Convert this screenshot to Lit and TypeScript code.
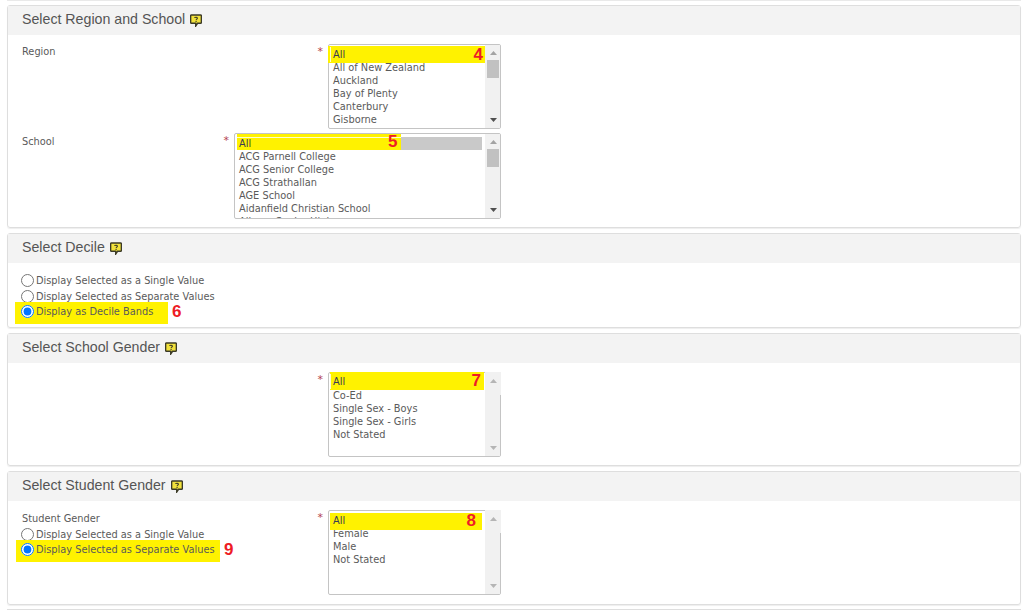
import { LitElement, html, css, nothing } from "lit";
import { customElement } from "lit/decorators.js";

const help = html`<svg class="help" width="12" height="13" viewBox="0 0 13 14" aria-hidden="true">
  <path d="M1.500 1h10a.8.8 0 0 1 .8.8v7.400a.8.8 0 0 1-.8.8H8.200L6.200 13V10H1.500a.8.8 0 0 1-.8-.8V1.800a.8.8 0 0 1 .8-.8z" fill="#f2e23c" stroke="#3b3a26" stroke-width="1.500"/>
  <path d="M5 4.300c.2-1 2.900-1.200 3 .2 0 1-1.400 1-1.400 2.100M6.600 7.500v1" fill="none" stroke="#3b3a26" stroke-width="1.200"/>
</svg>`;

type Mark = { n: string; cls: string };

function listbox(cls: string, items: string[], mark: Mark, scroll: boolean) {
  return html`<div class="listbox ${cls}">
    <div class="opts">
      ${items.map((t) => html`<div class="opt">${t}</div>`)}
    </div>
    <div class="mark ${mark.cls}"><span class="line"></span><span class="txt">All</span><b class="num">${mark.n}</b></div>
    <div class="sb">
      ${scroll ? nothing : html`<div class="cap"></div>`}
      <svg width="14" height="10" viewBox="0 0 14 10"><path d="M4 7h7L7.500 3z" fill="${scroll ? "#a3a3a3" : "#b5b5b5"}"/></svg>
      ${scroll ? html`<div class="thumb"></div>` : nothing}
      <div class="sp"></div>
      <svg width="14" height="10" viewBox="0 0 14 10"><path d="M4 3h7L7.500 7z" fill="${scroll ? "#505050" : "#b5b5b5"}"/></svg>
    </div>
  </div>`;
}

@customElement("app-root")
export class AppRoot extends LitElement {
  static styles = css`
    :host {
      display: block;
      width: 1024px;
      height: 610px;
      overflow: hidden;
      background: #fff;
      font-family: "DejaVu Sans", Verdana, sans-serif;
      font-size: 9.8px;
      color: #5a5a5a;
    }
    .page {
      display: flex;
      flex-direction: column;
      gap: 5px;
      padding: 0 3px 0 7px;
    }
    .sliver {
      height: 1px;
      margin-bottom: -1px;
      background: #e9e9e9;
    }
    .panel {
      border: 1px solid #dedede;
      border-radius: 3px;
      box-shadow: 0 1px 1px #eee;
    }
    .head {
      display: flex;
      align-items: center;
      gap: 5px;
      box-sizing: border-box;
      height: 29px;
      padding: 0 0 3px 14px;
      background: #f3f3f3;
      font: 14.2px "Liberation Sans", Arial, sans-serif;
      color: #555;
    }
    .help { margin-top: 2px; }
    .body {
      display: flex;
      flex-direction: column;
      gap: 4px;
      padding: 9px 14px;
      width: 479px;
    }
    .top { padding-bottom: 8px; }
    .row {
      display: flex;
      justify-content: space-between;
    }
    .lbl { padding-top: 2px; line-height: 13px; }
    .r1 .lbl { padding-top: 1px; }
    .ctl { display: flex; gap: 5px; }
    .star {
      color: #b3414f;
      font-size: 11px;
      line-height: 13px;
      padding-top: 1px;
    }
    .listbox {
      position: relative;
      box-sizing: border-box;
      height: 85px;
      border: 1px solid #c4c4c4;
      border-radius: 2px;
      display: flex;
    }
    .w1 { width: 173px; }
    .w2 { width: 267px; height: 86px; }
    .opts {
      flex: 1;
      padding: 16px 0 0 4px;
      line-height: 13px;
      box-sizing: border-box;
      height: 100%;
      overflow: hidden;
    }
    .opt { height: 13px; white-space: nowrap; }
    .sb {
      position: relative;
      width: 15px;
      background: #f1f1f1;
      display: flex;
      flex-direction: column;
      align-items: center;
      padding-top: 3px;
      box-sizing: border-box;
      height: 100%;
    }
    .sb svg { flex: none; position: relative; }
    .cap {
      position: absolute;
      top: -1px;
      right: -1px;
      width: 16px;
      height: 23px;
      background: #f1f1f1;
    }
    .thumb {
      width: 12px;
      height: 18px;
      margin-top: 2px;
      background: #c1c1c1;
    }
    .sp { flex: 1; }
    .sb svg:last-child { margin-bottom: 3px; }
    .mark {
      position: absolute;
      display: flex;
      align-items: center;
      justify-content: space-between;
      box-sizing: border-box;
      background: #fff200;
      color: #3a3a55;
      line-height: 13px;
    }
    .mark .txt { margin-left: 3px; }
    .mark .line { position: absolute; background: #fdfdd0; }
    .num {
      font: bold 17px/16px "Liberation Sans", Arial, sans-serif;
      color: #ee1c25;
    }
    .m4 { left: -1px; top: 1px; width: 157px; height: 17px; padding: 0 2px 0 2px; }
    .m4 .line { left: 2px; top: 1px; width: 1px; height: 15px; }
    .m5 { left: 2px; top: 3px; width: 245px; height: 13px; padding-left: 1px;
      background: linear-gradient(90deg, #fff200 164px, #c9c9c9 164px); }
    .m5 .txt { margin-left: 1px; }
    .m5 .line { left: 0; top: 0; width: 164px; height: 1px; }
    .m5 .num { position: absolute; left: 151px; top: -3px; }
    .m5::before {
      content: "";
      position: absolute;
      left: 0;
      top: -3px;
      width: 164px;
      height: 3px;
      background: #fff200;
    }
    .m7 { left: 1px; top: -1px; width: 154px; height: 18px; padding: 0 3px 0 0; }
    .m7 .line { left: 0; top: 2px; width: 1px; height: 15px; }
    .m8 { left: 1px; top: 2px; width: 152px; height: 17px; padding: 0 6px 2px 0; }
    .m8 .line { display: none; }
    .radios {
      position: relative;
      display: flex;
      flex-direction: column;
      gap: 2.500px;
    }
    .radio {
      display: flex;
      align-items: center;
      gap: 2px;
      height: 13px;
      position: relative;
      white-space: nowrap;
    }
    .radio input {
      width: 13px;
      height: 13px;
      margin: 0 0 0 -1px;
      flex: none;
      position: relative;
    }
    .radio span { position: relative; }
    .hl {
      position: absolute;
      top: -3px;
      height: 22px;
      background: #fff200;
    }
    .tag {
      position: absolute;
      font: bold 17px/16px "Liberation Sans", Arial, sans-serif;
      color: #ee1c25;
      top: -1px;
    }
    .decile { padding-top: 11px; padding-bottom: 9px; }
    .g { padding-bottom: 8px; }
    .student .lbl { padding-top: 2px; padding-bottom: 3px; }
    .student .radios { gap: 2px; }
    .lastpanel { height: 2px; border-top: 1px solid #dedede; margin-top: -1px; }
  `;

  private radio(text: string, checked = false, hl = 0, tag = "", left = -7) {
    return html`<label class="radio">
      ${hl ? html`<i class="hl" style="left:${left}px;width:${hl}px"></i>` : nothing}
      <input type="radio" ?checked=${checked} />
      <span>${text}</span>
      ${tag ? html`<b class="tag" style="left:${hl + left + 4}px">${tag}</b>` : nothing}
    </label>`;
  }

  render() {
    const regions = ["All of New Zealand", "Auckland", "Bay of Plenty", "Canterbury", "Gisborne", "Hawke's Bay"];
    const schools = ["ACG Parnell College", "ACG Senior College", "ACG Strathallan", "AGE School", "Aidanfield Christian School", "Albany Senior High"];
    return html`<div class="page">
      <div class="sliver"></div>
      <section class="panel">
        <div class="head">Select Region and School ${help}</div>
        <div class="body top">
          <div class="row r1">
            <div class="lbl">Region</div>
            <div class="ctl"><span class="star">*</span>${listbox("w1", regions, { n: "4", cls: "m4" }, true)}</div>
          </div>
          <div class="row">
            <div class="lbl">School</div>
            <div class="ctl"><span class="star">*</span>${listbox("w2", schools, { n: "5", cls: "m5" }, true)}</div>
          </div>
        </div>
      </section>
      <section class="panel">
        <div class="head">Select Decile ${help}</div>
        <div class="body decile">
          <div class="radios">
            ${this.radio("Display Selected as a Single Value")}
            ${this.radio("Display Selected as Separate Values")}
            ${this.radio("Display as Decile Bands", true, 153, "6")}
          </div>
        </div>
      </section>
      <section class="panel">
        <div class="head">Select School Gender ${help}</div>
        <div class="body g">
          <div class="row">
            <div></div>
            <div class="ctl"><span class="star">*</span>${listbox("w1", ["Co-Ed", "Single Sex - Boys", "Single Sex - Girls", "Not Stated"], { n: "7", cls: "m7" }, false)}</div>
          </div>
        </div>
      </section>
      <section class="panel">
        <div class="head">Select Student Gender ${help}</div>
        <div class="body">
          <div class="row student">
            <div>
              <div class="lbl">Student Gender</div>
              <div class="radios">
                ${this.radio("Display Selected as a Single Value")}
                ${this.radio("Display Selected as Separate Values", true, 204, "9", -6)}
              </div>
            </div>
            <div class="ctl"><span class="star">*</span>${listbox("w1", ["Female", "Male", "Not Stated"], { n: "8", cls: "m8" }, false)}</div>
          </div>
        </div>
      </section>
      <div class="lastpanel"></div>
    </div>`;
  }
}
